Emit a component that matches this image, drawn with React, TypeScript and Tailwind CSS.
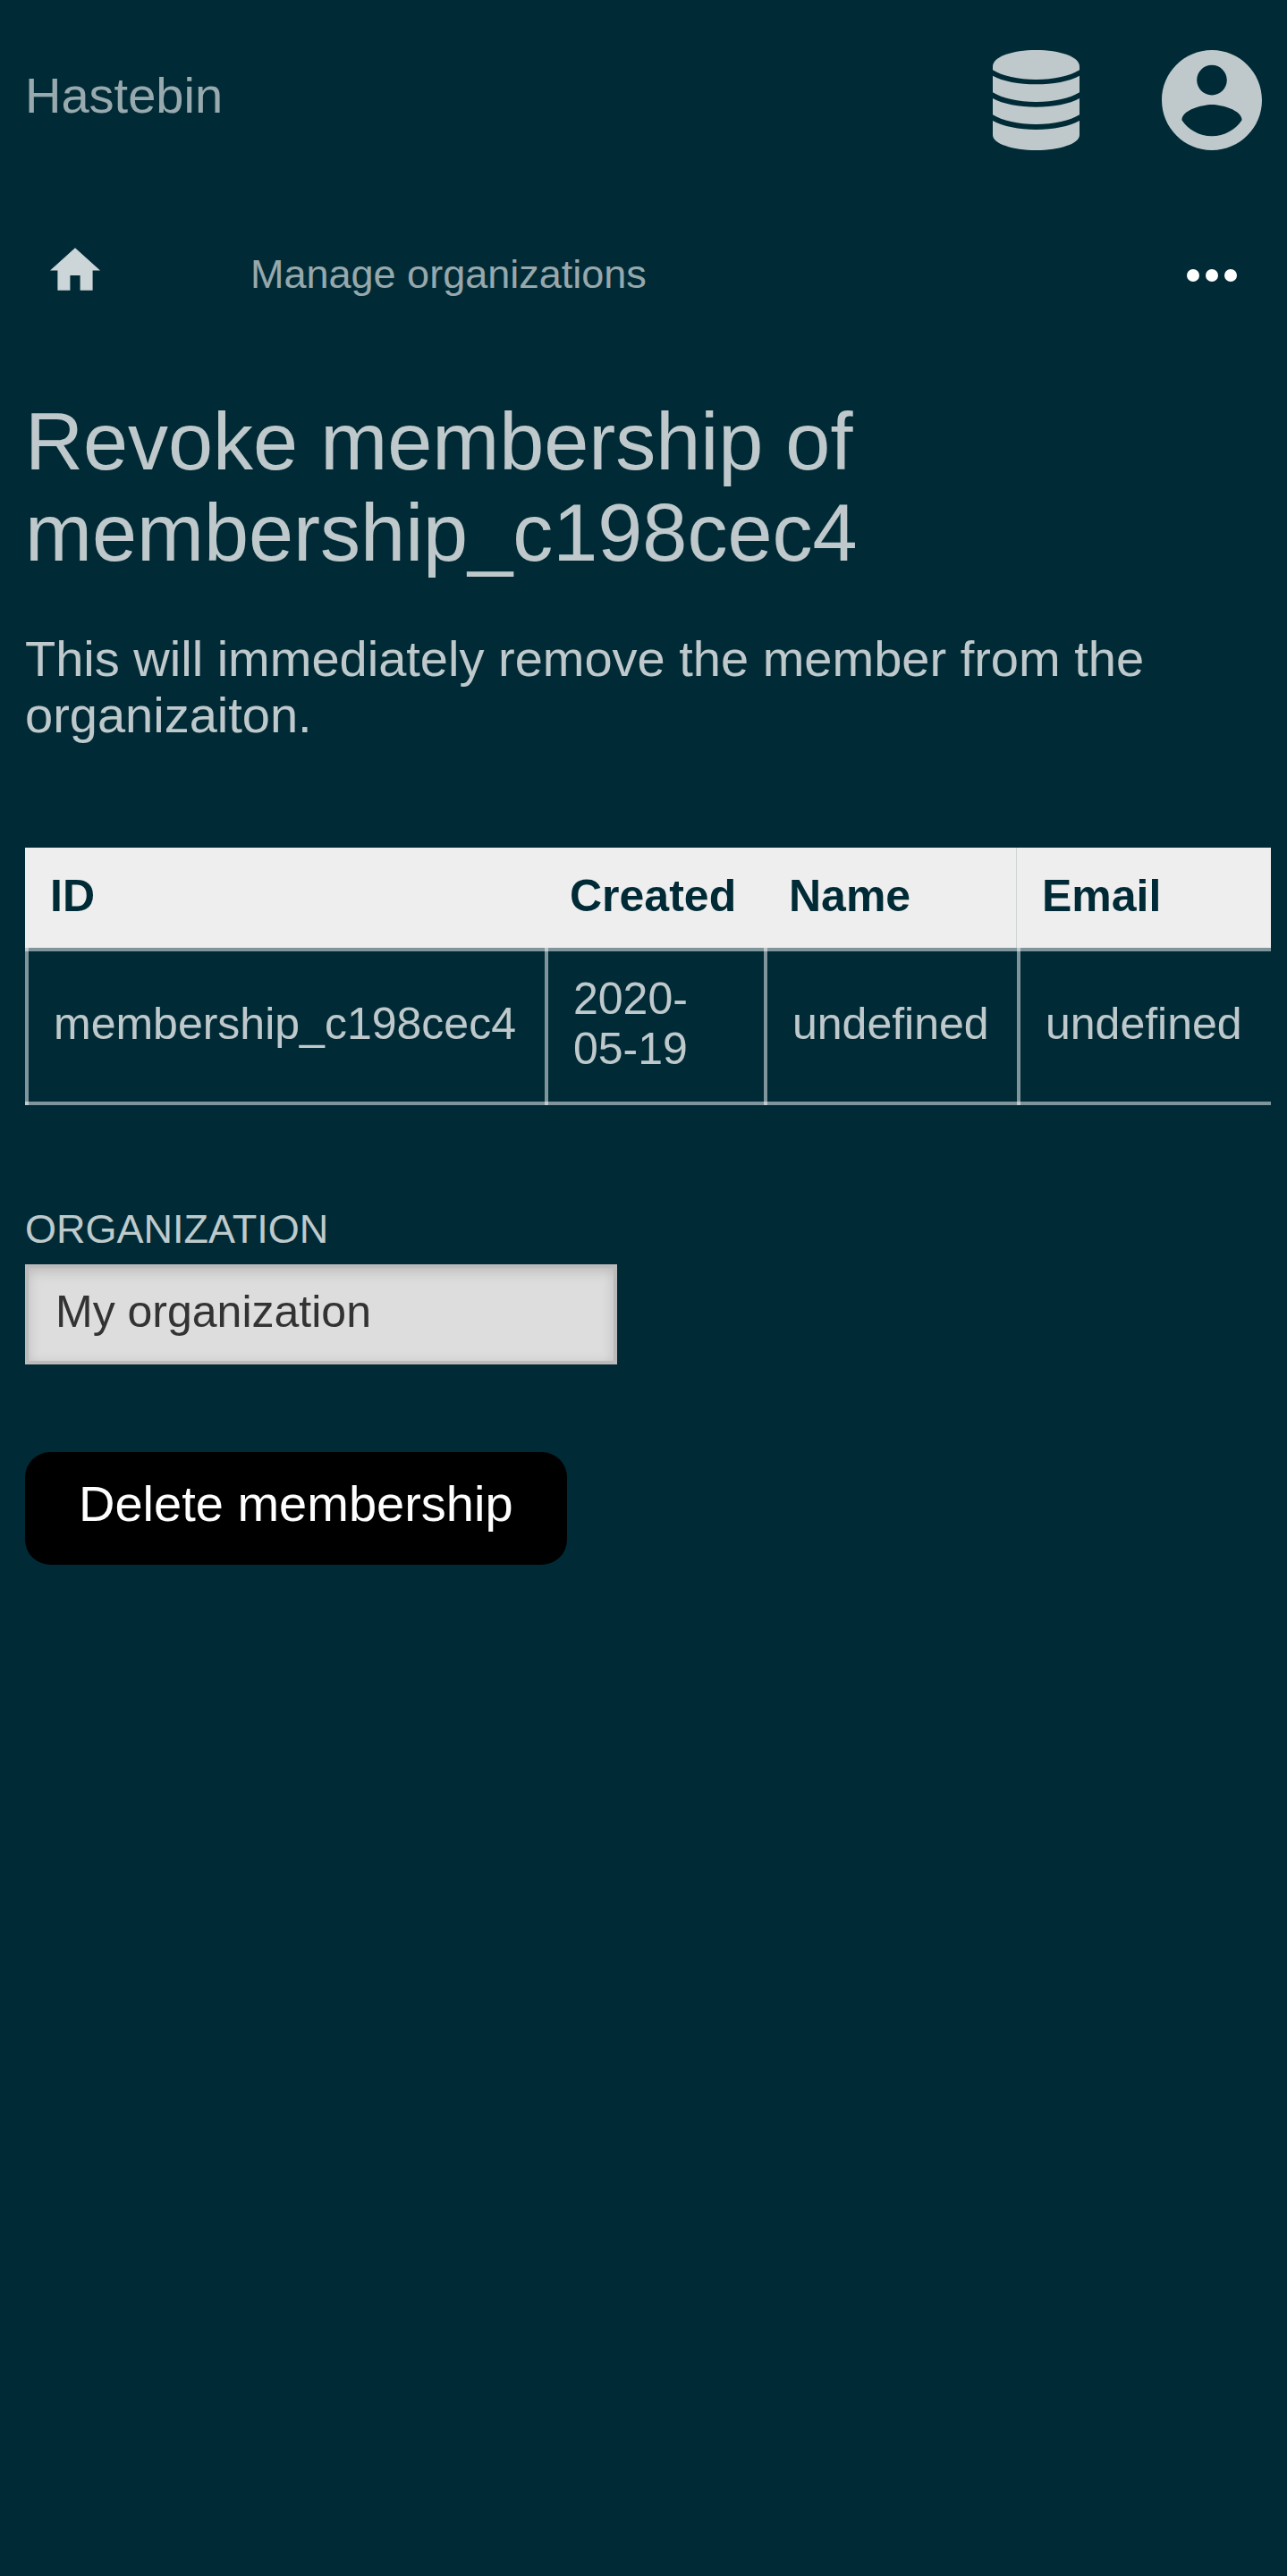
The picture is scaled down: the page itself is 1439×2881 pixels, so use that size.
const columns = [
  { name: "ID", width: "min-w-[581px]" },
  { name: "Created", width: "min-w-[245px]" },
  { name: "Name", width: "min-w-[283px] border-r border-[#d0d4d5]" },
  { name: "Email", width: "min-w-[284px]" },
];
const membership = ["membership_c198cec4", "2020-05-19", "undefined", "undefined"];

function DatabaseIcon() {
  return (
    <svg viewBox="0 0 291 336" className="h-[112px] w-[97px]" fill="currentColor" aria-hidden="true">
      <path d="M0 55C0 22 66 0 145.500 0S291 22 291 55V67C260 87 205 99 145.500 99S31 87 0 67Z" />
      <path d="M0 86C34 105 88 115 145.500 115S257 105 291 86V142C260 162 205 174 145.500 174S31 162 0 142Z" />
      <path d="M0 162C34 181 88 191 145.500 191S257 181 291 162V217C260 237 205 249 145.500 249S31 237 0 217Z" />
      <path d="M0 237C34 256 88 267 145.500 267S257 256 291 237V285C291 314 225 336 145.500 336S0 314 0 285Z" />
    </svg>
  );
}

function AccountIcon() {
  return (
    <svg viewBox="2 2 20 20" className="size-[112px]" fill="currentColor" aria-hidden="true">
      <path d="M12 2C6.48 2 2 6.48 2 12s4.48 10 10 10 10-4.48 10-10S17.52 2 12 2zm0 3c1.66 0 3 1.34 3 3s-1.34 3-3 3-3-1.34-3-3 1.34-3 3-3zm0 14.2c-2.5 0-4.71-1.28-6-3.22.03-1.99 4-3.08 6-3.08 1.99 0 5.97 1.09 6 3.08-1.29 1.94-3.5 3.22-6 3.22z" />
    </svg>
  );
}

function HomeIcon() {
  return (
    <svg viewBox="2 3 20 17" className="h-12 w-14" fill="currentColor" aria-hidden="true">
      <path d="M10 20v-6h4v6h5v-8h3L12 3 2 12h3v8z" />
    </svg>
  );
}

function MoreIcon() {
  return (
    <svg viewBox="4 10 16 4" className="h-3.5 w-14" fill="currentColor" aria-hidden="true">
      <circle cx="6" cy="12" r="2" />
      <circle cx="12" cy="12" r="2" />
      <circle cx="18" cy="12" r="2" />
    </svg>
  );
}

export default function App() {
  return (
    <div className="min-h-screen bg-[#002b36] px-7 pt-14 pb-14 font-['Liberation_Sans',sans-serif] text-[56px] leading-[63px] text-white/75">
      <header className="flex items-center justify-between">
        <a href="#" className="pb-2.5 leading-[64px] text-white/60">Hastebin</a>
        <div className="flex gap-[92px]">
          <button type="button" aria-label="Administration"><DatabaseIcon /></button>
          <button type="button" aria-label="Account"><AccountIcon /></button>
        </div>
      </header>

      <nav className="mt-[84px] flex h-28 items-center text-[45px] leading-[52px]">
        <a href="#" aria-label="Home" className="px-7 pb-3.5 text-white/80"><HomeIcon /></a>
        <a href="#" className="ml-28 px-7 pb-0.5 text-white/60">Manage organizations</a>
        <button type="button" aria-label="More" className="ml-auto px-7 text-white"><MoreIcon /></button>
      </nav>

      <main>
        <h1 className="mt-[79px] text-[90px] leading-[102px]">
          Revoke membership of membership_c198cec4
        </h1>
        <p className="mt-[58px]">This will immediately remove the member from the organizaiton.</p>

        <table className="mt-[117px] w-full border-separate border-spacing-0 text-left text-[50px] leading-[56px]">
          <thead>
            <tr>
              {columns.map((c) => (
                <th key={c.name} scope="col" className={`bg-[#eeeeee] px-7 pt-[26px] pb-[30px] font-bold text-[#002b36] ${c.width}`}>{c.name}</th>
              ))}
            </tr>
          </thead>
          <tbody>
            <tr>
              {membership.map((v, i) => (
                <td
                  key={i}
                  className="border-y-4 border-white/50 bg-[linear-gradient(rgba(255,255,255,0.5),rgba(255,255,255,0.5))] bg-[length:4px_100%] bg-origin-border bg-no-repeat pt-[25px] pr-7 pb-[31px] pl-8"
                >
                  {v}
                </td>
              ))}
            </tr>
          </tbody>
        </table>

        <form onSubmit={(e) => e.preventDefault()} className="mt-[113px] flex flex-col items-start">
          <label htmlFor="organization" className="text-[45px] leading-[52px] uppercase">Organization</label>
          <input
            id="organization"
            readOnly
            value="My organization"
            className="mt-[13px] h-28 w-[662px] max-w-full border-4 border-[#bbbbbb] bg-[#dddddd] px-[30px] pb-1.5 text-[50px] text-[#333333] shadow-[inset_0_4px_14px_#bbbbbb] outline-none"
          />
          <button type="submit" className="mt-[98px] rounded-[28px] bg-black px-[60px] pt-[26px] pb-9 leading-[64px] text-white">
            Delete membership
          </button>
        </form>
      </main>
    </div>
  );
}
